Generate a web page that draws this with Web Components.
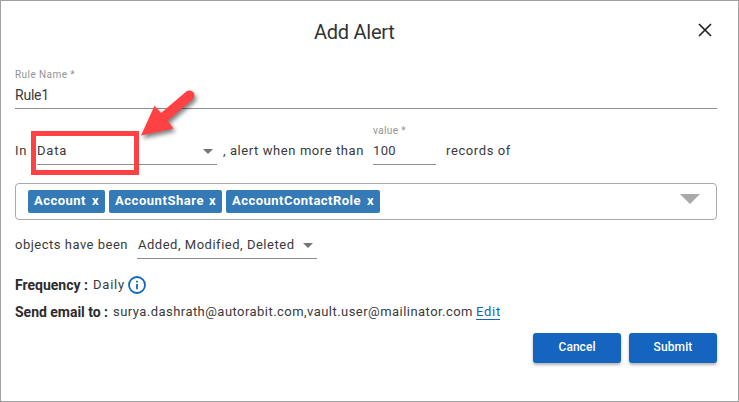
<!DOCTYPE html>
<html lang="en">
<head>
<meta charset="utf-8">
<title>Add Alert</title>
<style>
body{margin:0;background:#fff;font:13px/20px Roboto,"Liberation Sans",sans-serif;color:#3a3a3a}
</style>
</head>
<body>
<alert-dialog></alert-dialog>
<script>
const define = (name, html, ready) => {
  const t = document.createElement('template');
  t.innerHTML = html;
  customElements.define(name, class extends HTMLElement {
    connectedCallback() {
      if (this.shadowRoot) return;
      this.attachShadow({mode: 'open'}).append(t.content.cloneNode(true));
      if (ready) ready(this, this.shadowRoot);
    }
  });
};

/* Text tracked out to a given measure. */
define('tracked-text', `<style>:host{display:block;flex:none;white-space:pre}span{display:inline-block}</style><span><slot></slot></span>`, (el, root) => {
  const w = +el.getAttribute('w'), s = root.querySelector('span');
  const natural = s.getBoundingClientRect().width;
  s.style.letterSpacing = ((w - natural) / el.textContent.length).toFixed(3) + 'px';
  el.style.width = w + 'px';
});

define('text-field', `<style>
:host{display:block;box-sizing:border-box;border-bottom:1px solid #8c8c8c;height:41px;flex:none}
.l{display:block;font-size:10px;line-height:14px;height:17px;color:#949494}
</style><div class="l"><slot name="label"></slot></div><slot></slot>`);

define('select-field', `<style>
:host{display:flex;box-sizing:border-box;border-bottom:1px solid #8c8c8c;height:24px;width:180px;justify-content:space-between;flex:none;padding:0 4px 0 0}
svg{margin-top:8px}
</style><slot></slot><svg width="10" height="5"><path d="M0 0H10L5 5Z" fill="#757575"/></svg>`);

define('object-tag', `<style>
:host{display:flex;box-sizing:border-box;height:23px;border-radius:2px;background:#337ab7;color:#fff;font-weight:700;padding:1px 6px 0;justify-content:space-between}
</style><slot></slot><tracked-text w="7">x</tracked-text>`);

define('tag-box', `<style>
:host{display:flex;box-sizing:border-box;height:37px;border:1px solid #aaa;border-radius:4px;padding:6px 16px 0 12px;gap:4px}
svg{margin:4px 0 0 auto}
</style><slot></slot><svg width="20" height="10"><path d="M0 0H20L10 10Z" fill="#aaa"/></svg>`);

define('action-button', `<style>
:host{display:flex;box-sizing:border-box;width:88px;height:30px;border-radius:3px;background:#1565c0;color:#fff;font-size:12px;font-weight:500;justify-content:center;padding-top:4px;box-shadow:0 2px 3px rgba(0,0,0,.3)}
</style><slot></slot>`);

define('callout-mark', `<style>:host{position:absolute;left:29px;top:84px;width:180px;height:95px;pointer-events:none}svg{display:block}</style>
<svg width="180" height="95" viewBox="30 85 180 95">
<rect x="33.5" y="133.5" width="103" height="39" fill="none" stroke="#ff4144" stroke-width="5"/>
<path d="M141 135.5L154.5 105.8L161 113L186 91.7A5 5 0 0 1 192.7 99.2L167.5 120.8L173.5 128.5Z" fill="#ff4144" style="filter:drop-shadow(2px 3px 2px rgba(0,0,0,.5))"/></svg>`);

define('alert-dialog', `<style>
:host{display:flex;flex-direction:column;box-sizing:border-box;position:relative;width:739px;height:402px;border:1px solid #a0a0a0;padding:19px 21px 0 14px}
.row{display:flex;flex:none}
header{display:flex;height:48px;justify-content:space-between;font-size:20px;line-height:24px;color:#333}
header tracked-text{margin-left:299px}
header svg{margin:3px 5px 0 0}
.when{margin-top:15px;height:41px;align-items:flex-end}
.when>*{flex:none}
.when>tracked-text{height:24px}
.name{font-size:14px;font-weight:700;color:#2c2c2c}
.link{color:#1565c0;height:16px;line-height:20px}
.link::after{content:"";display:block;height:1px;width:24px;margin-top:-3px;background:#1565c0}
footer{display:flex;gap:8px;justify-content:flex-end;margin-top:11px}
</style>
<header><tracked-text w="80.5">Add Alert</tracked-text>
<svg width="14" height="14"><path d="M1 1L13 13M13 1L1 13" stroke="#222" stroke-width="1.7"/></svg></header>
<text-field><tracked-text slot="label" w="60">Rule Name *</tracked-text><tracked-text w="34" style="font-size:14px">Rule1</tracked-text></text-field>
<div class="row when">
<tracked-text w="12">In</tracked-text>
<select-field style="margin-left:10px"><tracked-text w="30">Data</tracked-text></select-field>
<tracked-text w="141" style="margin-left:6px">, alert when more than</tracked-text>
<text-field style="width:63px;margin-left:9px"><tracked-text slot="label" w="33">value *</tracked-text><tracked-text w="23">100</tracked-text></text-field>
<tracked-text w="65" style="margin-left:10px">records of</tracked-text>
</div>
<tag-box style="margin-top:18px">
<object-tag style="width:77px"><tracked-text w="52">Account</tracked-text></object-tag>
<object-tag style="width:113px"><tracked-text w="89">AccountShare</tracked-text></object-tag>
<object-tag style="width:154px"><tracked-text w="129">AccountContactRole</tracked-text></object-tag>
</tag-box>
<div class="row" style="margin-top:15px"><tracked-text w="113">objects have been</tracked-text>
<select-field style="margin-left:9px"><tracked-text w="156" style="margin-left:1px">Added, Modified, Deleted</tracked-text></select-field></div>
<div class="row" style="margin-top:16px"><tracked-text class="name" w="73">Frequency :</tracked-text>
<tracked-text w="32" style="margin-left:5px">Daily</tracked-text>
<svg width="18" height="18" style="margin:1px 0 0 3px"><circle cx="9" cy="9" r="8" fill="none" stroke="#1168bb" stroke-width="1.8"/><path d="M9 8V13.3M9 4.7V6.5" stroke="#1168bb" stroke-width="1.8"/></svg></div>
<div class="row" style="margin-top:7px"><tracked-text class="name" w="93">Send email to :</tracked-text>
<tracked-text w="360" style="margin-left:5px">surya.dashrath@autorabit.com,vault.user@mailinator.com</tracked-text>
<tracked-text class="link" w="25" style="margin-left:3px">Edit</tracked-text></div>
<footer><action-button><tracked-text w="37">Cancel</tracked-text></action-button><action-button><tracked-text w="39">Submit</tracked-text></action-button></footer>
<callout-mark></callout-mark>`);
</script>
</body>
</html>
